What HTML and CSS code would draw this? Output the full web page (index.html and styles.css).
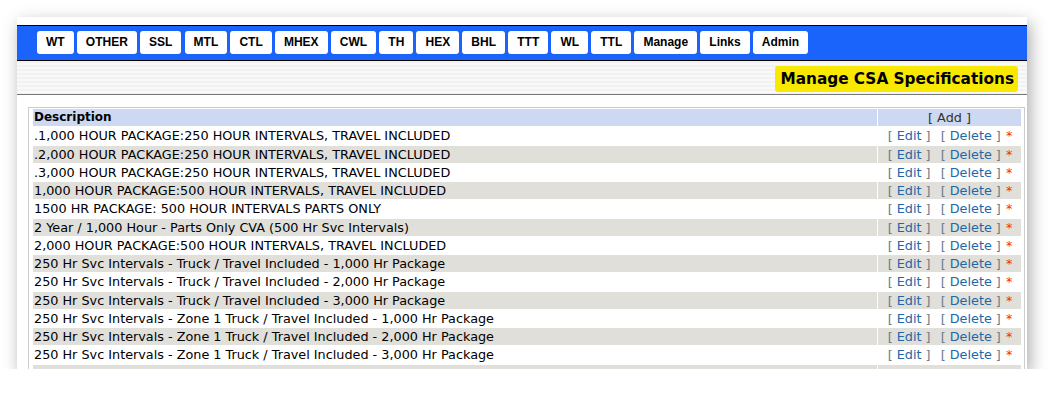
FILE: index.html
```html
<!DOCTYPE html>
<html>
<head>
<meta charset="utf-8">
<link rel="stylesheet" href="styles.css">
</head>
<body>
<div class="window">
  <div class="topgap"></div>
  <div class="navbar">
    <a class="btn">WT</a><a class="btn">OTHER</a><a class="btn">SSL</a><a class="btn">MTL</a><a class="btn">CTL</a><a class="btn">MHEX</a><a class="btn">CWL</a><a class="btn">TH</a><a class="btn">HEX</a><a class="btn">BHL</a><a class="btn">TTT</a><a class="btn">WL</a><a class="btn">TTL</a><a class="btn">Manage</a><a class="btn">Links</a><a class="btn">Admin</a>
  </div>
  <div class="subbar">
    <div class="heading">Manage CSA Specifications</div>
  </div>
  <div class="content">
    <div class="tablebox">
      <table class="grid">
        <tr class="head"><th class="desc">Description</th><th class="act"><span class="add">[ Add ]</span></th></tr>
        <tr><td class="desc">.1,000 HOUR PACKAGE:250 HOUR INTERVALS, TRAVEL INCLUDED</td><td class="act"><span class="lnk edit">[ <span>Edit</span> ]</span> <span class="lnk">[ <span>Delete</span> ]</span> <span class="star">*</span></td></tr>
        <tr class="alt"><td class="desc">.2,000 HOUR PACKAGE:250 HOUR INTERVALS, TRAVEL INCLUDED</td><td class="act"><span class="lnk edit">[ <span>Edit</span> ]</span> <span class="lnk">[ <span>Delete</span> ]</span> <span class="star">*</span></td></tr>
        <tr><td class="desc">.3,000 HOUR PACKAGE:250 HOUR INTERVALS, TRAVEL INCLUDED</td><td class="act"><span class="lnk edit">[ <span>Edit</span> ]</span> <span class="lnk">[ <span>Delete</span> ]</span> <span class="star">*</span></td></tr>
        <tr class="alt"><td class="desc">1,000 HOUR PACKAGE:500 HOUR INTERVALS, TRAVEL INCLUDED</td><td class="act"><span class="lnk edit">[ <span>Edit</span> ]</span> <span class="lnk">[ <span>Delete</span> ]</span> <span class="star">*</span></td></tr>
        <tr><td class="desc">1500 HR PACKAGE: 500 HOUR INTERVALS PARTS ONLY</td><td class="act"><span class="lnk edit">[ <span>Edit</span> ]</span> <span class="lnk">[ <span>Delete</span> ]</span> <span class="star">*</span></td></tr>
        <tr class="alt"><td class="desc">2 Year / 1,000 Hour - Parts Only CVA (500 Hr Svc Intervals)</td><td class="act"><span class="lnk edit">[ <span>Edit</span> ]</span> <span class="lnk">[ <span>Delete</span> ]</span> <span class="star">*</span></td></tr>
        <tr><td class="desc">2,000 HOUR PACKAGE:500 HOUR INTERVALS, TRAVEL INCLUDED</td><td class="act"><span class="lnk edit">[ <span>Edit</span> ]</span> <span class="lnk">[ <span>Delete</span> ]</span> <span class="star">*</span></td></tr>
        <tr class="alt"><td class="desc">250 Hr Svc Intervals - Truck / Travel Included - 1,000 Hr Package</td><td class="act"><span class="lnk edit">[ <span>Edit</span> ]</span> <span class="lnk">[ <span>Delete</span> ]</span> <span class="star">*</span></td></tr>
        <tr><td class="desc">250 Hr Svc Intervals - Truck / Travel Included - 2,000 Hr Package</td><td class="act"><span class="lnk edit">[ <span>Edit</span> ]</span> <span class="lnk">[ <span>Delete</span> ]</span> <span class="star">*</span></td></tr>
        <tr class="alt"><td class="desc">250 Hr Svc Intervals - Truck / Travel Included - 3,000 Hr Package</td><td class="act"><span class="lnk edit">[ <span>Edit</span> ]</span> <span class="lnk">[ <span>Delete</span> ]</span> <span class="star">*</span></td></tr>
        <tr><td class="desc">250 Hr Svc Intervals - Zone 1 Truck / Travel Included - 1,000 Hr Package</td><td class="act"><span class="lnk edit">[ <span>Edit</span> ]</span> <span class="lnk">[ <span>Delete</span> ]</span> <span class="star">*</span></td></tr>
        <tr class="alt"><td class="desc">250 Hr Svc Intervals - Zone 1 Truck / Travel Included - 2,000 Hr Package</td><td class="act"><span class="lnk edit">[ <span>Edit</span> ]</span> <span class="lnk">[ <span>Delete</span> ]</span> <span class="star">*</span></td></tr>
        <tr><td class="desc">250 Hr Svc Intervals - Zone 1 Truck / Travel Included - 3,000 Hr Package</td><td class="act"><span class="lnk edit">[ <span>Edit</span> ]</span> <span class="lnk">[ <span>Delete</span> ]</span> <span class="star">*</span></td></tr>
        <tr class="alt"><td class="desc">3,000 HOUR PACKAGE:500 HOUR INTERVALS, TRAVEL INCLUDED</td><td class="act"><span class="lnk edit">[ <span>Edit</span> ]</span> <span class="lnk">[ <span>Delete</span> ]</span> <span class="star">*</span></td></tr>
      </table>
    </div>
  </div>
</div>
</body>
</html>
```

FILE: styles.css
```css
html, body {
  margin: 0;
  padding: 0;
  background: #ffffff;
}
.window {
  margin: 17px 0 0 17px;
  width: 1010px;
  height: 352px;
  overflow: hidden;
  background: #ffffff;
  box-shadow: 3px 6px 16px rgba(0, 0, 0, 0.34);
}
.topgap {
  height: 8px;
}
.navbar {
  display: flex;
  gap: 3.2px;
  background: #1b64fb;
  border-top: 1px solid #000;
  border-bottom: 1px solid #000;
  padding: 5px 20px 6px;
}
.btn {
  display: block;
  height: 23px;
  padding: 0 9px;
  background: #ffffff;
  border-radius: 3px;
  font: bold 12px "Liberation Sans", Arial, sans-serif;
  line-height: 23px;
  color: #000;
}
.subbar {
  height: 34px;
  display: flex;
  justify-content: flex-end;
  align-items: flex-start;
  padding: 5px 9px 0 0;
  box-sizing: border-box;
  border-bottom: 1px solid #777;
  background: repeating-linear-gradient(to bottom, #f2f2f2 0, #f2f2f2 2px, #f9f9f9 2px, #f9f9f9 4px);
}
.heading {
  background: #f9e900;
  height: 26px;
  padding: 0 4px 0 5px;
  border-radius: 3px;
  font: bold 15.3px "DejaVu Sans", Verdana, sans-serif;
  line-height: 26px;
  color: #000;
}
.content {
  padding: 12px 2px 0 11px;
}
.tablebox {
  border: 1px solid #cccccc;
  padding: 0 2px 0 3px;
}
.grid {
  width: 100%;
  border-collapse: separate;
  border-spacing: 1px;
  font-family: "DejaVu Sans", Verdana, sans-serif;
}
.grid th, .grid td {
  padding: 1px 1px;
  line-height: 15.25px;
  white-space: nowrap;
}
.grid th {
  font-size: 12px;
  font-weight: bold;
  background: #cdd9f3;
  text-align: left;
  color: #000;
}
.grid td {
  font-size: 12.8px;
  color: #000;
}
.grid .act {
  width: 141px;
  text-align: center;
}
.grid th.act {
  font-weight: normal;
  font-size: 12.8px;
}
.add {
  color: #3a3020;
}
.alt td {
  background: #e0dfda;
}
.lnk {
  color: #6b7a8a;
  margin: 0 1px;
}
.lnk.edit {
  margin-right: 5px;
}
.lnk span {
  color: #1c68a8;
}
.star {
  color: #ff2a00;
}
```
